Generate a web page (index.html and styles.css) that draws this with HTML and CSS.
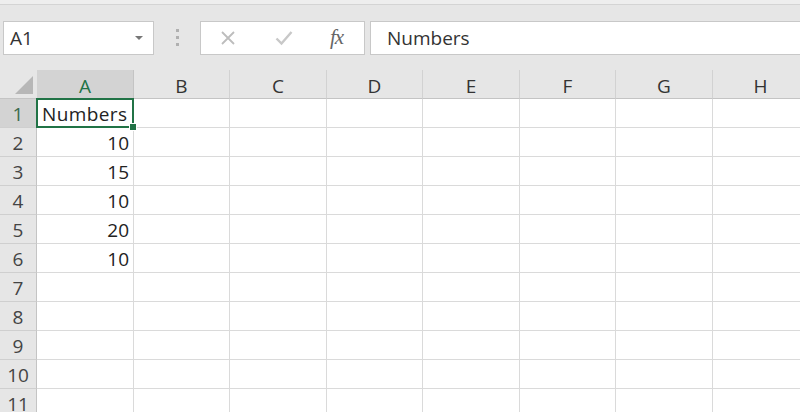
FILE: index.html
```html
<!DOCTYPE html>
<html>
<head>
    <title>Sheet</title>
    <link rel="stylesheet" href="styles.css">
</head>
<body>
    <div class="top-strip"></div>

    <!-- Formula bar -->
    <div class="formula-bar">
        <div class="name-box">
            <span class="name-text">A1</span>
            <span class="name-arrow"></span>
        </div>
        <div class="grip">
            <span></span><span></span><span></span>
        </div>
        <div class="fx-buttons">
            <svg class="fx-icon" width="16" height="16" viewBox="0 0 16 16">
                <path d="M2 2 L14 14 M14 2 L2 14" stroke="#bdbdbd" stroke-width="1.8" fill="none"/>
            </svg>
            <svg class="fx-icon" width="18" height="16" viewBox="0 0 18 16">
                <path d="M1.5 8.5 L6.5 13.5 L16.5 2" stroke="#c8c8c8" stroke-width="2.4" fill="none"/>
            </svg>
            <span class="fx-label"><i>f</i><i>x</i></span>
        </div>
        <div class="formula-input">Numbers</div>
    </div>

    <!-- Grid -->
    <div class="sheet" id="sheet"></div>

    <script>
        const cols = ['A', 'B', 'C', 'D', 'E', 'F', 'G', 'H', ''];
        const values = ['Numbers', '10', '15', '10', '20', '10'];
        const sheet = document.getElementById('sheet');

        function cell(cls, text) {
            const div = document.createElement('div');
            div.className = cls;
            if (text) div.innerText = text;
            sheet.appendChild(div);
            return div;
        }

        // header row
        const corner = cell('corner');
        corner.innerHTML = '<span class="corner-tri"></span>';
        cols.forEach(function(c, i) {
            cell('col-head' + (i === 0 ? ' active' : ''), c);
        });

        // data rows
        for (let r = 1; r <= 11; r++) {
            cell('row-head' + (r === 1 ? ' active' : ''), String(r));
            cols.forEach(function(c, i) {
                let text = '';
                let cls = 'cell';
                if (i === 0 && values[r - 1]) {
                    text = values[r - 1];
                    cls += r === 1 ? ' text selected' : ' num';
                }
                const el = cell(cls, text);
                if (r === 1 && i === 0) {
                    el.innerHTML += '<span class="handle"></span>';
                }
            });
        }
    </script>
</body>
</html>
```

FILE: styles.css
```css
body {
    margin: 0;
    padding: 0;
    background-color: #e6e6e6;
    font-family: "Open Sans", "Noto Sans", sans-serif;
    overflow: hidden;
    height: 412px;
}
.top-strip {
    height: 4px;
    background: #eeeeee;
    border-bottom: 1px solid #d4d4d4;
}
.formula-bar {
    display: flex;
    align-items: center;
    height: 35px;
    padding: 15px 0 15px 3px;
}
.name-box {
    width: 151px;
    height: 34px;
    box-sizing: border-box;
    background: #fff;
    border: 1px solid #c8c8c8;
    display: flex;
    align-items: center;
    justify-content: space-between;
    padding: 0 10px 0 6px;
}
.name-text {
    font-size: 19px;
    color: #333;
}
.name-arrow {
    width: 0;
    height: 0;
    border-left: 4px solid transparent;
    border-right: 4px solid transparent;
    border-top: 4px solid #777;
}
.grip {
    width: 46px;
    display: flex;
    flex-direction: column;
    align-items: center;
    gap: 4px;
}
.grip span {
    width: 3px;
    height: 3px;
    background: #b0b0b0;
}
.fx-buttons {
    width: 165px;
    height: 34px;
    box-sizing: border-box;
    background: #fff;
    border: 1px solid #c8c8c8;
    display: flex;
    align-items: center;
    padding-left: 19px;
}
.fx-icon:first-child {
    margin-right: 39px;
}
.fx-icon:nth-child(2) {
    margin-right: 37px;
}
.fx-label {
    font-family: "Liberation Serif", "DejaVu Serif", serif;
    font-size: 21px;
    color: #666;
    letter-spacing: -1px;
}
.formula-input {
    flex: 1;
    margin-left: 5px;
    height: 34px;
    box-sizing: border-box;
    background: #fff;
    border: 1px solid #c8c8c8;
    border-right: none;
    font-size: 19px;
    color: #333;
    line-height: 32px;
    padding-left: 16px;
}
.sheet {
    display: grid;
    grid-template-columns: 37px 97px 96px 97px 96px 97px 96px 97px 96px 1fr;
    grid-template-rows: 29px repeat(11, 29px);
}
.corner {
    background: #e6e6e6;
    border-bottom: 1px solid #c4c4c4;
    position: relative;
}
.corner-tri {
    position: absolute;
    right: 4px;
    bottom: 4px;
    width: 0;
    height: 0;
    border-left: 18px solid transparent;
    border-bottom: 18px solid #b7b7b7;
}
.col-head {
    background: #e6e6e6;
    border-bottom: 1px solid #c4c4c4;
    border-right: 1px solid #d2d2d2;
    text-align: center;
    font-size: 19px;
    line-height: 28px;
    color: #333;
    padding-top: 2px;
    box-sizing: border-box;
}
.col-head.active {
    background: #d3d3d3;
    color: #217346;
    border-right-color: #c4c4c4;
}
.row-head {
    background: #e6e6e6;
    border-bottom: 1px solid #cfcfcf;
    border-right: 1px solid #c4c4c4;
    text-align: center;
    font-size: 19px;
    line-height: 30px;
    color: #444;
}
.row-head.active {
    background: #d3d3d3;
    color: #3b6a4c;
}
.cell {
    background: #fff;
    border-right: 1px solid #dadada;
    border-bottom: 1px solid #dadada;
    font-size: 19px;
    line-height: 31px;
    color: #222;
    position: relative;
}
.cell.num {
    text-align: right;
    padding-right: 4px;
}
.cell.text {
    padding-left: 5px;
    letter-spacing: 0.4px;
}
.selected::after {
    content: "";
    position: absolute;
    top: -1px;
    left: -1px;
    right: -1px;
    bottom: -1px;
    border: 2px solid #217346;
}
.handle {
    position: absolute;
    right: -4px;
    bottom: -4px;
    width: 6px;
    height: 6px;
    background: #217346;
    border: 1px solid #fff;
    z-index: 2;
}
```
